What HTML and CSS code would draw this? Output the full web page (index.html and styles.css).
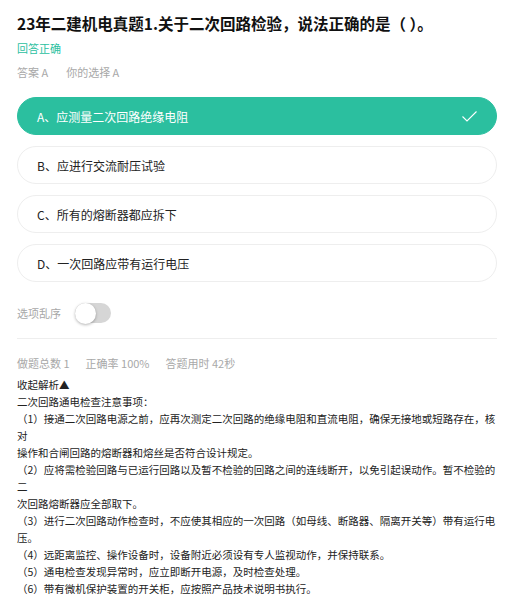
FILE: index.html
```html
<!DOCTYPE html>
<html lang="zh-CN">
<head>
    <meta charset="UTF-8">
    <meta name="viewport" content="width=device-width, initial-scale=1.0">
    <title>二建机电真题</title>
    <link rel="stylesheet" href="styles.css">
</head>
<body>
    <div class="page">
        <!-- Question -->
        <h1 class="title">23年二建机电真题1.关于二次回路检验，说法正确的是（ ）。</h1>
        <div class="result">回答正确</div>
        <div class="answer">
            <span>答案 A</span>
            <span>你的选择 A</span>
        </div>

        <!-- Options -->
        <ul class="options">
            <li class="option correct">
                <span>A、应测量二次回路绝缘电阻</span>
                <svg class="check" width="15" height="11" viewBox="0 0 15 11">
                    <polyline points="0.5,5.5 5,10 14.5,0.5" fill="none" stroke="#fff" stroke-width="1.1"/>
                </svg>
            </li>
            <li class="option"><span>B、应进行交流耐压试验</span></li>
            <li class="option"><span>C、所有的熔断器都应拆下</span></li>
            <li class="option"><span>D、一次回路应带有运行电压</span></li>
        </ul>

        <div class="shuffle">
            <span>选项乱序</span>
            <span class="switch"><span class="knob"></span></span>
        </div>

        <div class="stats">
            <span>做题总数 1</span>
            <span>正确率 100%</span>
            <span>答题用时 42秒</span>
        </div>

        <!-- Analysis -->
        <div class="analysis">
            <div class="fold">收起解析▲</div>
            <p>二次回路通电检查注意事项：<br>（1）接通二次回路电源之前，应再次测定二次回路的绝缘电阻和直流电阻，确保无接地或短路存在，核对<br>操作和合闸回路的熔断器和熔丝是否符合设计规定。<br>（2）应将需检验回路与已运行回路以及暂不检验的回路之间的连线断开，以免引起误动作。暂不检验的二<br>次回路熔断器应全部取下。<br>（3）进行二次回路动作检查时，不应使其相应的一次回路（如母线、断路器、隔离开关等）带有运行电压。<br>（4）远距离监控、操作设备时，设备附近必须设有专人监视动作，并保持联系。<br>（5）通电检查发现异常时，应立即断开电源，及时检查处理。<br>（6）带有微机保护装置的开关柜，应按照产品技术说明书执行。</p>
        </div>
    </div>
</body>
</html>
```

FILE: styles.css
```css
body {
    margin: 0;
    font-family: "Noto Sans CJK SC", "Noto Sans", sans-serif;
    background: #fff;
    color: #222;
}

.page {
    padding: 12px 10px 0 17px;
}

.title {
    margin: 0;
    font-size: 15.5px;
    line-height: 22px;
    font-weight: bold;
    color: #111;
}

.result {
    margin-top: 6px;
    font-size: 11px;
    line-height: 16px;
    color: #2bbf9f;
}

.answer {
    margin-top: 8px;
    display: flex;
    gap: 18px;
    font-size: 11px;
    line-height: 16px;
    color: #a8a8a8;
}

.options {
    list-style: none;
    margin: 17px 0 0 0;
    padding: 0;
    width: 480px;
    display: flex;
    flex-direction: column;
    gap: 11px;
}

.option {
    box-sizing: border-box;
    height: 38px;
    border: 1px solid #eee;
    border-radius: 19px;
    padding: 0 19px 0 19px;
    display: flex;
    align-items: center;
    justify-content: space-between;
    font-size: 12px;
    color: #222;
}

.option.correct {
    background: #2bbf9f;
    border-color: #2bbf9f;
    color: #fff;
}

.shuffle {
    width: 480px;
    margin-top: 20px;
    padding-bottom: 14px;
    border-bottom: 1px solid #eee;
    display: flex;
    align-items: center;
    gap: 14px;
    font-size: 11px;
    line-height: 22px;
    color: #a8a8a8;
}

.switch {
    width: 36px;
    height: 20px;
    border-radius: 10px;
    background: #d6d6d6;
    display: flex;
    align-items: center;
}

.knob {
    width: 21px;
    height: 21px;
    border-radius: 50%;
    background: #fff;
    box-shadow: 0 1px 3px rgba(0, 0, 0, 0.3);
}

.stats {
    margin-top: 16px;
    display: flex;
    gap: 16px;
    font-size: 11px;
    line-height: 16px;
    color: #a8a8a8;
}

.analysis {
    margin-top: 5px;
    width: 480px;
    font-size: 10.5px;
    line-height: 17px;
    color: #222;
}

.analysis p {
    margin: 0;
}
```
